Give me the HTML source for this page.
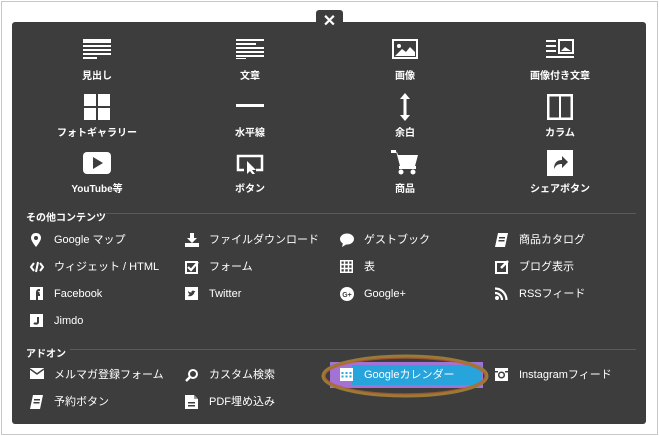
<!DOCTYPE html><html><head><meta charset="utf-8"><style>
*{margin:0;padding:0;box-sizing:border-box}
body{width:659px;height:436px;background:#fff;position:relative;overflow:hidden;font-family:"Liberation Sans","Noto Sans CJK JP",sans-serif;color:#fff}
.frame{position:absolute;left:1px;top:1px;width:657px;height:434px;border:1px solid #c8c8c8}
.panel{position:absolute;left:12px;top:22px;width:634px;height:402px;background:#3d3d3d;border-radius:3px}
.tab{position:absolute;left:316px;top:10px;width:27px;height:20px;background:#3d3d3d;border-radius:3px 3px 0 0;font-size:16px;font-weight:bold;text-align:center;line-height:24px}
.it{position:absolute;width:150px;text-align:center}
.it svg{display:block;margin:0 auto}
.lb{position:absolute;width:150px;text-align:center;font-size:10px;font-weight:bold}
.li{position:absolute;font-size:11px;height:16px;line-height:16px;white-space:nowrap}
.li svg{position:absolute;left:0;top:1px}
.li span{position:absolute;left:24px}
.hd{position:absolute;font-size:10px;font-weight:bold}
.ln{position:absolute;height:1px;background:#5a5a5a}
</style></head><body>
<div class="frame"></div>
<div class="panel"></div>
<div class="tab">✕</div>

<div class="it" style="left:22px;top:39px"><svg width="28" height="20" fill="#fff"><rect x="0" y="0" width="28" height="4"/><rect x="0" y="6" width="28" height="2"/><rect x="0" y="10" width="28" height="2"/><rect x="0" y="14" width="28" height="2"/><rect x="0" y="18" width="14" height="2"/></svg></div>
<div class="it" style="left:175px;top:39px"><svg width="28" height="20" fill="#fff"><rect x="0" y="0" width="28" height="2"/><rect x="0" y="4" width="20" height="2"/><rect x="0" y="8" width="28" height="2"/><rect x="0" y="12" width="28" height="2"/><rect x="0" y="16" width="28" height="2"/><rect x="0" y="19" width="10" height="1"/></svg></div>
<div class="it" style="left:330px;top:39px"><svg width="26" height="20"><rect x="1" y="1" width="24" height="18" fill="none" stroke="#fff" stroke-width="2"/><circle cx="7" cy="7" r="2" fill="#fff"/><path d="M3 17 L10 10 L14 13 L18 8 L23 13 L23 17Z" fill="#fff"/></svg></div>
<div class="it" style="left:485px;top:39px"><svg width="28" height="20" fill="#fff"><rect x="0" y="1" width="10" height="2"/><rect x="0" y="6" width="10" height="2"/><rect x="0" y="11" width="10" height="2"/><rect x="0" y="17" width="28" height="2"/><rect x="13" y="1" width="14" height="13" fill="none" stroke="#fff" stroke-width="2"/><path d="M15 12 L19 8 L25 12Z"/></svg></div>
<div class="lb" style="left:22px;top:67px">見出し</div>
<div class="lb" style="left:175px;top:67px">文章</div>
<div class="lb" style="left:330px;top:67px">画像</div>
<div class="lb" style="left:485px;top:67px">画像付き文章</div>

<div class="it" style="left:22px;top:94px"><svg width="26" height="26" fill="#fff"><rect x="0" y="0" width="12" height="12"/><rect x="14" y="0" width="12" height="12"/><rect x="0" y="14" width="12" height="12"/><rect x="14" y="14" width="12" height="12"/></svg></div>
<div class="it" style="left:175px;top:104px"><svg width="28" height="4"><rect width="28" height="3" fill="#fff"/></svg></div>
<div class="it" style="left:330px;top:93px"><svg width="10" height="28"><path d="M5 0 L10 6 H6.5 V22 H10 L5 28 L0 22 H3.5 V6 H0Z" fill="#fff"/></svg></div>
<div class="it" style="left:485px;top:94px"><svg width="26" height="26"><rect x="1" y="1" width="24" height="24" fill="none" stroke="#fff" stroke-width="3"/><rect x="12" y="1" width="2" height="24" fill="#fff"/></svg></div>
<div class="lb" style="left:22px;top:124px">フォトギャラリー</div>
<div class="lb" style="left:175px;top:124px">水平線</div>
<div class="lb" style="left:330px;top:124px">余白</div>
<div class="lb" style="left:485px;top:124px">カラム</div>

<div class="it" style="left:22px;top:152px"><svg width="28" height="22"><rect width="28" height="22" rx="4" fill="#fff"/><path d="M10 5 L20 11 L10 17Z" fill="#3d3d3d"/></svg></div>
<div class="it" style="left:175px;top:154px"><svg width="28" height="20"><path d="M8 16 H2 V2 H26 V16 H20" fill="none" stroke="#fff" stroke-width="2.5"/><path d="M11 7 L11 20 L14 17 L17 21 L19 20 L16 16 L20 16Z" fill="#fff"/></svg></div>
<div class="it" style="left:330px;top:150px"><svg width="28" height="26" fill="#fff"><path d="M0 1 H5 L9 16 H24 L27 5 H7 L6 2 Z"/><rect x="0" y="0" width="5" height="3"/><rect x="8" y="16" width="17" height="3"/><circle cx="10" cy="22" r="2.5"/><circle cx="22" cy="22" r="2.5"/></svg></div>
<div class="it" style="left:485px;top:150px"><svg width="26" height="26"><rect width="26" height="26" fill="#fff"/><path d="M7 19 C7 12 11 10 15 10 V6 L21 12 L15 18 V14 C11 14 9 15 7 19Z" fill="#3d3d3d"/></svg></div>
<div class="lb" style="left:22px;top:180px">YouTube等</div>
<div class="lb" style="left:175px;top:180px">ボタン</div>
<div class="lb" style="left:330px;top:180px">商品</div>
<div class="lb" style="left:485px;top:180px">シェアボタン</div>

<div class="hd" style="left:26px;top:209px">その他コンテンツ</div>
<div class="ln" style="left:106px;top:213px;width:530px"></div>

<div class="li" style="left:30px;top:232px"><svg width="12" height="14"><path d="M6 0 C2.5 0 1 2.5 1 5 C1 8 6 14 6 14 C6 14 11 8 11 5 C11 2.5 9.5 0 6 0Z" fill="#fff"/><circle cx="6" cy="5" r="2" fill="#3d3d3d"/></svg><span>Google マップ</span></div>
<div class="li" style="left:185px;top:232px"><svg width="14" height="14" fill="#fff"><path d="M5 0 H9 V5 H12 L7 10 L2 5 H5Z"/><rect x="0" y="10" width="14" height="4"/></svg><span>ファイルダウンロード</span></div>
<div class="li" style="left:340px;top:232px"><svg width="14" height="14"><ellipse cx="7" cy="6" rx="7" ry="5.5" fill="#fff"/><path d="M3 10 L2 14 L7 11Z" fill="#fff"/></svg><span>ゲストブック</span></div>
<div class="li" style="left:495px;top:232px"><svg width="13" height="14"><path d="M3 0 H13 L10 14 H0Z" fill="#fff"/><rect x="4" y="4" width="6" height="1.5" fill="#3d3d3d"/><rect x="3.5" y="7" width="6" height="1.5" fill="#3d3d3d"/></svg><span>商品カタログ</span></div>

<div class="li" style="left:30px;top:259px"><svg width="14" height="14"><path d="M4 3 L1 7 L4 11 M10 3 L13 7 L10 11 M8 2 L6 12" stroke="#fff" stroke-width="2" fill="none"/></svg><span>ウィジェット / HTML</span></div>
<div class="li" style="left:185px;top:259px"><svg width="14" height="14"><rect x="1" y="2" width="11" height="11" fill="none" stroke="#fff" stroke-width="2"/><path d="M3 7 L6 10 L13 2" stroke="#fff" stroke-width="2.2" fill="none"/></svg><span>フォーム</span></div>
<div class="li" style="left:340px;top:259px"><svg width="13" height="13"><rect x="0.75" y="0.75" width="11.5" height="11.5" fill="none" stroke="#fff" stroke-width="1.5"/><path d="M0 4.5 H13 M0 8.5 H13 M4.5 0 V13 M8.5 0 V13" stroke="#fff" stroke-width="1.5"/></svg><span>表</span></div>
<div class="li" style="left:495px;top:259px"><svg width="14" height="14"><rect x="1" y="2" width="11" height="11" fill="none" stroke="#fff" stroke-width="2"/><path d="M6 8 L13 1" stroke="#fff" stroke-width="2.5"/></svg><span>ブログ表示</span></div>

<div class="li" style="left:30px;top:286px"><svg width="13" height="13"><rect width="13" height="13" fill="#fff"/><path d="M7 13 V6 H9.5 M7 8 H10 M7 6 C7 3 8 3 10 3" stroke="#3d3d3d" stroke-width="2" fill="none"/></svg><span>Facebook</span></div>
<div class="li" style="left:185px;top:286px"><svg width="13" height="13"><rect width="13" height="13" fill="#fff"/><path d="M3 9 C6 10 9 8 9.5 5 L10.5 4 L9 4 C8 3 6 4 6.5 5.5 C5 5.5 4 5 3 4 C3 6 4 6.5 4.5 7 C4 7.5 3.5 8.5 3 9Z" fill="#3d3d3d"/></svg><span>Twitter</span></div>
<div class="li" style="left:340px;top:286px"><svg width="14" height="14"><circle cx="7" cy="7" r="7" fill="#fff"/><text x="7" y="10" font-size="7" font-weight="bold" fill="#3d3d3d" text-anchor="middle" font-family="Liberation Sans">G+</text></svg><span>Google+</span></div>
<div class="li" style="left:495px;top:286px"><svg width="13" height="13"><circle cx="2" cy="11" r="2" fill="#fff"/><path d="M0 6 A7 7 0 0 1 7 13 M0 1.5 A11.5 11.5 0 0 1 11.5 13" stroke="#fff" stroke-width="2.2" fill="none"/></svg><span>RSSフィード</span></div>

<div class="li" style="left:30px;top:313px"><svg width="13" height="13"><rect width="13" height="13" fill="#fff"/><path d="M8 3 V8 C8 10 5 10 4 9" stroke="#3d3d3d" stroke-width="2" fill="none"/></svg><span>Jimdo</span></div>

<div class="hd" style="left:26px;top:345px">アドオン</div>
<div class="ln" style="left:70px;top:349px;width:566px"></div>

<div class="li" style="left:30px;top:367px"><svg width="14" height="12"><rect width="14" height="11" fill="#fff"/><path d="M0 1 L7 6 L14 1" stroke="#3d3d3d" stroke-width="1.5" fill="none"/></svg><span>メルマガ登録フォーム</span></div>
<div class="li" style="left:185px;top:367px"><svg width="14" height="14"><circle cx="8" cy="6" r="4" fill="none" stroke="#fff" stroke-width="2"/><path d="M5 9 L1 13" stroke="#fff" stroke-width="2.5"/></svg><span>カスタム検索</span></div>

<svg style="position:absolute;left:320px;top:352px" width="172" height="48">
<rect x="10" y="10" width="153" height="26" fill="#a272d6"/>
<rect x="32" y="13" width="130" height="20" fill="#27a4dc"/>
<ellipse cx="85" cy="24" rx="82" ry="20" fill="none" stroke="#9a7a38" stroke-width="3"/>
<ellipse cx="85" cy="24" rx="80" ry="18" fill="none" stroke="#c0602a" stroke-width="1.5" opacity="0.7"/>
</svg>
<div class="li" style="left:340px;top:367px"><svg width="13" height="13"><rect width="13" height="13" fill="#fff"/><g fill="#27a4dc"><rect x="1.5" y="4" width="2" height="2"/><rect x="5.5" y="4" width="2" height="2"/><rect x="9.5" y="4" width="2" height="2"/><rect x="1.5" y="7.5" width="2" height="2"/><rect x="5.5" y="7.5" width="2" height="2"/><rect x="9.5" y="7.5" width="2" height="2"/></g></svg><span>Googleカレンダー</span></div>
<div class="li" style="left:495px;top:367px"><svg width="13" height="13"><rect width="13" height="13" fill="#fff"/><circle cx="6.5" cy="7" r="2.8" fill="none" stroke="#3d3d3d" stroke-width="1.5"/><rect x="0" y="3" width="3" height="1.5" fill="#3d3d3d"/><rect x="10" y="3" width="3" height="1.5" fill="#3d3d3d"/></svg><span>Instagramフィード</span></div>

<div class="li" style="left:30px;top:394px"><svg width="13" height="14"><path d="M3 0 H13 L10 14 H0Z" fill="#fff"/><rect x="4" y="4" width="6" height="1.5" fill="#3d3d3d"/><rect x="3.5" y="7" width="6" height="1.5" fill="#3d3d3d"/></svg><span>予約ボタン</span></div>
<div class="li" style="left:185px;top:394px"><svg width="13" height="14"><path d="M0 0 H9 L13 4 V14 H0Z" fill="#fff"/><path d="M9 0 V4 H13" fill="#999"/><rect x="3" y="7" width="7" height="1.5" fill="#3d3d3d"/><rect x="3" y="10" width="7" height="1.5" fill="#3d3d3d"/></svg><span>PDF埋め込み</span></div>
</body></html>
